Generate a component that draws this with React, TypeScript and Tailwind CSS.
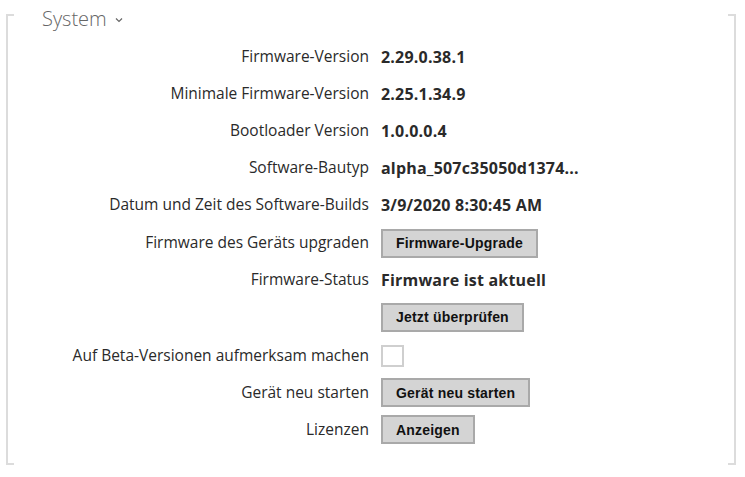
import React from 'react'

// ── System settings panel ─────────────────────────────────────────────

type Row = {
  label: string
  h: string
  value?: string
  button?: string
  checkbox?: boolean
}

const rows: Row[] = [
  { label: 'Firmware-Version', value: '2.29.0.38.1', h: 'h-[37px]' },
  { label: 'Minimale Firmware-Version', value: '2.25.1.34.9', h: 'h-[37px]' },
  { label: 'Bootloader Version', value: '1.0.0.0.4', h: 'h-[37px]' },
  { label: 'Software-Bautyp', value: 'alpha_507c35050d1374...', h: 'h-[37px]' },
  { label: 'Datum und Zeit des Software-Builds', value: '3/9/2020 8:30:45 AM', h: 'h-[37px]' },
  { label: 'Firmware des Geräts upgraden', button: 'Firmware-Upgrade', h: 'h-[40px]' },
  { label: 'Firmware-Status', value: 'Firmware ist aktuell', h: 'h-[34px]' },
  { label: '', button: 'Jetzt überprüfen', h: 'h-[40px]' },
  { label: 'Auf Beta-Versionen aufmerksam machen', checkbox: true, h: 'h-[37px]' },
  { label: 'Gerät neu starten', button: 'Gerät neu starten', h: 'h-[37px]' },
  { label: 'Lizenzen', button: 'Anzeigen', h: 'h-[37px]' },
]

function GreyButton({ children }: { children: React.ReactNode }) {
  return (
    <button
      className="h-[29px] px-[13px] bg-[#d4d4d4] border-2 border-[#a9a9a9] text-[14px] font-bold text-[#111] tracking-[0.2px] leading-none"
      style={{ fontFamily: '"Liberation Sans", Arial, sans-serif' }}
    >
      {children}
    </button>
  )
}

export default function App() {
  return (
    <div className="w-[745px] h-[477px] bg-white pt-[14px] pl-[6px]" style={{ fontFamily: '"Open Sans", "Noto Sans", sans-serif' }}>
      <div className="relative flex flex-col w-[730px] h-[451px] border-x-2 border-[#dcdcdc]">
        {/* bracket corner ticks */}
        <div className="absolute -left-[2px] top-0 w-[8px] h-[2px] bg-[#dcdcdc]" />
        <div className="absolute -right-[2px] top-0 w-[8px] h-[2px] bg-[#dcdcdc]" />
        <div className="absolute -left-[2px] bottom-0 w-[8px] h-[2px] bg-[#dcdcdc]" />
        <div className="absolute -right-[2px] bottom-0 w-[8px] h-[2px] bg-[#dcdcdc]" />

        {/* title */}
        <div className="-mt-[6px] ml-[34px] h-[21px] flex items-center gap-[8px] text-[20px] leading-[21px] text-[#666] font-light">
          <span>System</span>
          <svg width="8" height="6" viewBox="0 0 8 6" className="mt-[3px]">
            <path d="M1 1.5 L4 4.5 L7 1.5" fill="none" stroke="#666" strokeWidth="1.2" />
          </svg>
        </div>

        <div className="mt-[9px] flex flex-col">
          {rows.map((r, i) => (
            <div key={i} className={`${r.h} flex items-center`}>
              <div className="w-[362px] text-right text-[15.5px] text-[#2a2a2a] pr-[1px] whitespace-nowrap">{r.label}</div>
              <div className="ml-[11px] flex items-center">
                {r.value && <span className="text-[16px] font-bold text-[#2a2a2a] tracking-[0.2px]">{r.value}</span>}
                {r.button && <GreyButton>{r.button}</GreyButton>}
                {r.checkbox && <div className="w-[23px] h-[22px] border-2 border-[#cfcfcf] bg-white" />}
              </div>
            </div>
          ))}
        </div>
      </div>
    </div>
  )
}
